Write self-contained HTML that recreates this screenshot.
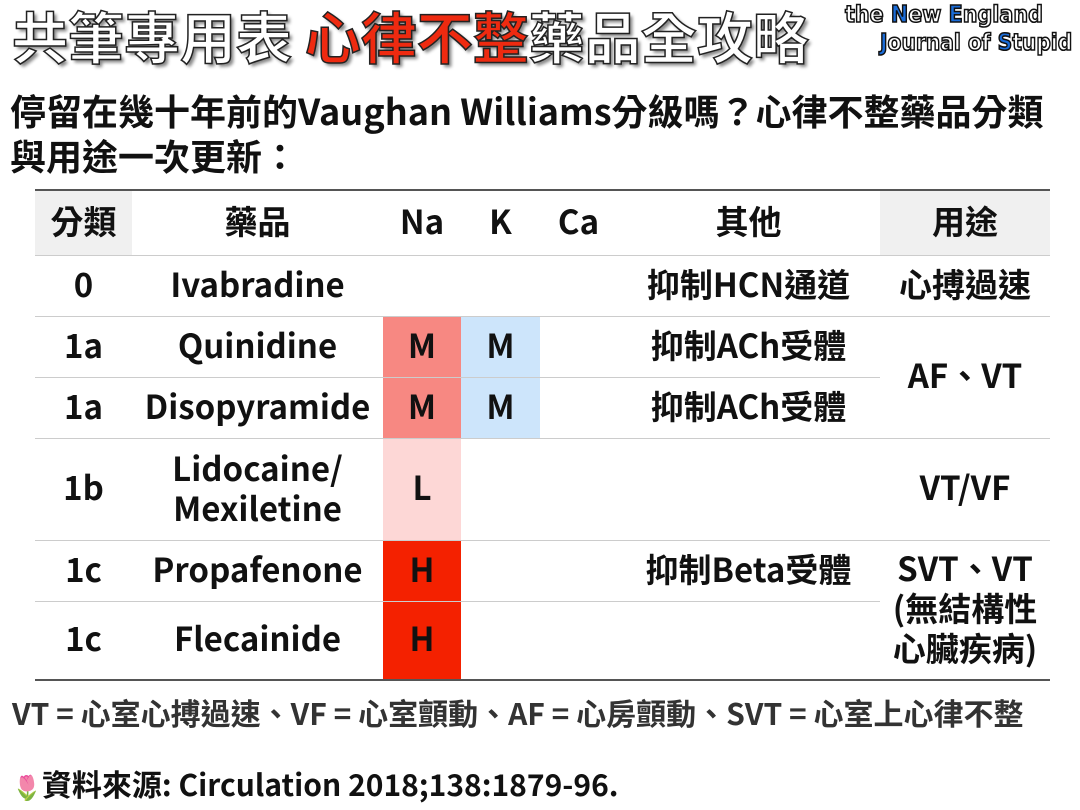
<!DOCTYPE html>
<html><head><meta charset="utf-8"><style>
*{margin:0;padding:0;box-sizing:border-box}
body{width:1080px;height:810px;background:#fff;position:relative;overflow:hidden;font-family:"Noto Sans CJK TC","Liberation Sans",sans-serif;font-weight:bold;color:#111}
.a{position:absolute}
.c{position:absolute;display:flex;align-items:center;justify-content:center;text-align:center;font-size:33px;line-height:1.2}
.h{position:absolute;left:35px;width:1015px;height:1px;background:#ccc}
</style></head><body>
<div class="a" style="left:12px;top:-5px;font-size:56px;font-weight:bold;color:#fff;-webkit-text-stroke:1.5px #222;text-shadow:3px 3px 3px #888;white-space:nowrap">共筆專用表 <span style="color:#ee2a10">心律不整</span>藥品全攻略</div>
<div class="a" style="left:845px;top:2px;font-size:23px;font-weight:900;color:#fff;-webkit-text-stroke:1.6px #111;white-space:nowrap;font-family:'DejaVu Sans',sans-serif;transform:scaleX(0.9);transform-origin:left;line-height:26px">the <span style="color:#1a6cd8">N</span>ew <span style="color:#1a6cd8">E</span>ngland</div>
<div class="a" style="left:880px;top:30px;font-size:23px;font-weight:900;color:#fff;-webkit-text-stroke:1.6px #111;white-space:nowrap;font-family:'DejaVu Sans',sans-serif;transform:scaleX(0.88);transform-origin:left;line-height:26px"><span style="color:#1a6cd8">J</span>ournal of <span style="color:#1a6cd8">S</span>tupid</div>
<div class="a" style="left:10px;top:88px;font-size:36px;line-height:45px;width:1070px;white-space:nowrap">停留在幾十年前的Vaughan Williams分級嗎？心律不整藥品分類<br>與用途一次更新：</div>

<div class="a" style="left:35px;top:189px;width:1015px;height:2px;background:#555"></div>
<div class="a" style="left:35px;top:191px;width:97px;height:64px;background:#f0f0f0"></div>
<div class="a" style="left:880px;top:191px;width:170px;height:64px;background:#f0f0f0"></div>
<div class="a" style="left:383px;top:317px;width:78px;height:121px;background:#f78882"></div>
<div class="a" style="left:461px;top:317px;width:79px;height:121px;background:#cde5fb"></div>
<div class="a" style="left:383px;top:438px;width:78px;height:102px;background:#fdd7d6"></div>
<div class="a" style="left:383px;top:540px;width:78px;height:140px;background:#f42100"></div>
<div class="h" style="top:255px"></div>
<div class="h" style="top:316px"></div>
<div class="h" style="top:377px;width:845px"></div>
<div class="h" style="top:438px"></div>
<div class="h" style="top:540px"></div>
<div class="h" style="top:601px;width:845px"></div>
<div class="a" style="left:35px;top:679px;width:1015px;height:2px;background:#555"></div>

<div class="c" style="left:35px;top:189px;width:97px;height:64px">分類</div>
<div class="c" style="left:132px;top:189px;width:251px;height:64px">藥品</div>
<div class="c" style="left:383px;top:189px;width:78px;height:64px">Na</div>
<div class="c" style="left:461px;top:189px;width:79px;height:64px">K</div>
<div class="c" style="left:540px;top:189px;width:77px;height:64px">Ca</div>
<div class="c" style="left:617px;top:189px;width:263px;height:64px">其他</div>
<div class="c" style="left:880px;top:189px;width:170px;height:64px">用途</div>

<div class="c" style="left:35px;top:253px;width:97px;height:61px">0</div>
<div class="c" style="left:132px;top:253px;width:251px;height:61px">Ivabradine</div>
<div class="c" style="left:617px;top:253px;width:263px;height:61px">抑制HCN通道</div>
<div class="c" style="left:880px;top:253px;width:170px;height:61px">心搏過速</div>

<div class="c" style="left:35px;top:314px;width:97px;height:61px">1a</div>
<div class="c" style="left:132px;top:314px;width:251px;height:61px">Quinidine</div>
<div class="c" style="left:383px;top:314px;width:78px;height:61px">M</div>
<div class="c" style="left:461px;top:314px;width:79px;height:61px">M</div>
<div class="c" style="left:617px;top:314px;width:263px;height:61px">抑制ACh受體</div>
<div class="c" style="left:35px;top:375px;width:97px;height:61px">1a</div>
<div class="c" style="left:132px;top:375px;width:251px;height:61px">Disopyramide</div>
<div class="c" style="left:383px;top:375px;width:78px;height:61px">M</div>
<div class="c" style="left:461px;top:375px;width:79px;height:61px">M</div>
<div class="c" style="left:617px;top:375px;width:263px;height:61px">抑制ACh受體</div>
<div class="c" style="left:880px;top:314px;width:170px;height:122px">AF、VT</div>

<div class="c" style="left:35px;top:436px;width:97px;height:102px">1b</div>
<div class="c" style="left:132px;top:436px;width:251px;height:102px;line-height:40px">Lidocaine/<br>Mexiletine</div>
<div class="c" style="left:383px;top:436px;width:78px;height:102px">L</div>
<div class="c" style="left:880px;top:436px;width:170px;height:102px">VT/VF</div>

<div class="c" style="left:35px;top:538px;width:97px;height:61px">1c</div>
<div class="c" style="left:132px;top:538px;width:251px;height:61px">Propafenone</div>
<div class="c" style="left:383px;top:538px;width:78px;height:61px">H</div>
<div class="c" style="left:617px;top:538px;width:263px;height:61px">抑制Beta受體</div>
<div class="c" style="left:35px;top:599px;width:97px;height:78px">1c</div>
<div class="c" style="left:132px;top:599px;width:251px;height:78px">Flecainide</div>
<div class="c" style="left:383px;top:599px;width:78px;height:78px">H</div>
<div class="c" style="left:880px;top:547px;width:170px;height:120px;line-height:40px">SVT、VT<br>(無結構性<br>心臟疾病)</div>

<div class="a" style="left:12px;top:691px;font-size:30px;color:#333;white-space:nowrap;line-height:42px">VT = 心室心搏過速、VF = 心室顫動、AF = 心房顫動、SVT = 心室上心律不整</div>
<div class="a" style="left:12px;top:761px;font-size:30px;color:#111;white-space:nowrap;line-height:44px"><span style="font-size:24px">🌷</span>資料來源: Circulation 2018;138:1879-96.</div>
</body></html>
